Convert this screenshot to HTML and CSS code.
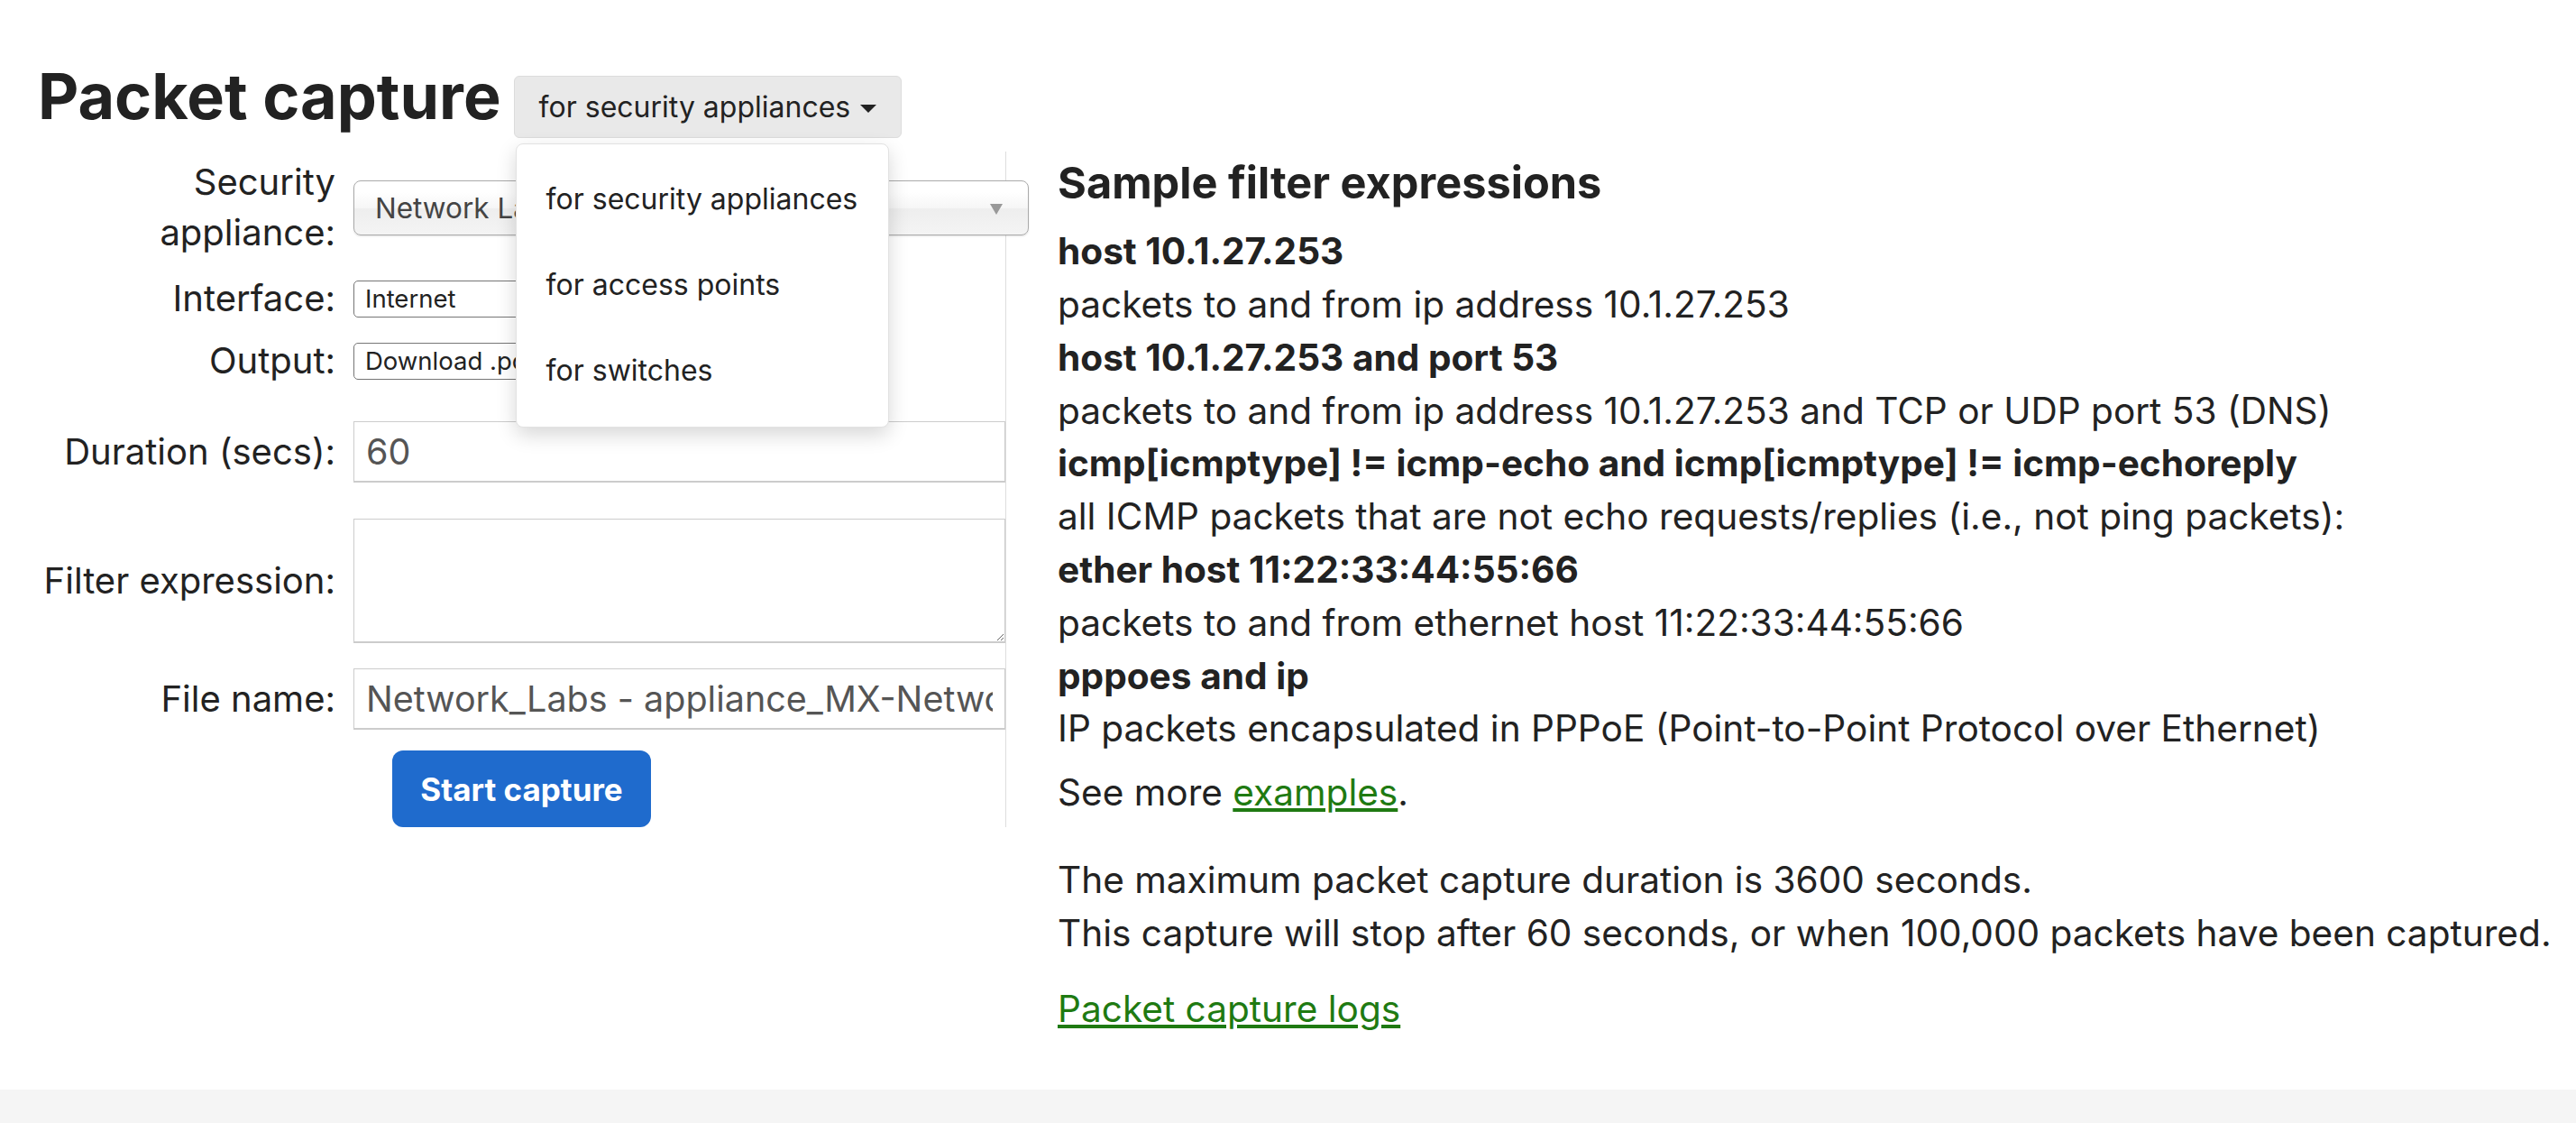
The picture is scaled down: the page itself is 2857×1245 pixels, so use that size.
FILE: index.html
```html
<!DOCTYPE html>
<html lang="en">
<head>
    <meta charset="UTF-8">
    <meta name="viewport" content="width=device-width, initial-scale=1.0">
    <title>Packet capture</title>
    <link rel="stylesheet" href="styles.css">
</head>
<body>
    <div class="page-header">
        <h1 class="page-title">Packet capture</h1>
        <div class="type-picker">
            <button class="type-toggle">for security appliances <span class="caret"></span></button>
            <div class="type-menu">
                <a href="#">for security appliances</a>
                <a href="#">for access points</a>
                <a href="#">for switches</a>
            </div>
        </div>
    </div>

    <div class="capture">
        <form class="capture-form">
            <div class="field field-first">
                <label class="field-label">Security appliance:</label>
                <div class="appliance-select">
                    <span>Network Labs - appliance_MX</span>
                    <b class="appliance-arrow"></b>
                </div>
            </div>

            <div class="field field-interface">
                <label class="field-label" for="iface">Interface:</label>
                <select id="iface" class="plain-select">
                    <option>Internet</option>
                </select>
            </div>

            <div class="field field-output">
                <label class="field-label" for="output">Output:</label>
                <select id="output" class="plain-select">
                    <option>Download .pcap file (for Wireshark)</option>
                </select>
            </div>

            <div class="field field-duration">
                <label class="field-label" for="duration">Duration (secs):</label>
                <input id="duration" class="text-input" type="text" value="60">
            </div>

            <div class="field field-filter">
                <label class="field-label" for="filter">Filter expression:</label>
                <textarea id="filter" class="text-input filter-box"></textarea>
            </div>

            <div class="field field-file">
                <label class="field-label" for="fileName">File name:</label>
                <input id="fileName" class="text-input" type="text" value="Network_Labs - appliance_MX-Network_Labs - Internet">
            </div>

            <div class="form-actions">
                <button type="button" class="start-btn">Start capture</button>
            </div>
        </form>

        <div class="info">
            <h2>Sample filter expressions</h2>
            <dl>
                <dt>host 10.1.27.253</dt>
                <dd>packets to and from ip address 10.1.27.253</dd>
                <dt>host 10.1.27.253 and port 53</dt>
                <dd>packets to and from ip address 10.1.27.253 and TCP or UDP port 53 (DNS)</dd>
                <dt>icmp[icmptype] != icmp-echo and icmp[icmptype] != icmp-echoreply</dt>
                <dd>all ICMP packets that are not echo requests/replies (i.e., not ping packets):</dd>
                <dt>ether host 11:22:33:44:55:66</dt>
                <dd>packets to and from ethernet host 11:22:33:44:55:66</dd>
                <dt>pppoes and ip</dt>
                <dd>IP packets encapsulated in PPPoE (Point-to-Point Protocol over Ethernet)</dd>
            </dl>
            <p class="more">See more <a href="#">examples</a>.</p>
            <p class="limits">The maximum packet capture duration is 3600 seconds.<br>This capture will stop after 60 seconds, or when 100,000 packets have been captured.</p>
            <p class="logs"><a href="#">Packet capture logs</a></p>
        </div>
    </div>

    <div class="site-footer"></div>
</body>
</html>
```

FILE: styles.css
```css
body {
    margin: 0;
    font-family: Inter, "Noto Sans", sans-serif;
    color: #222;
    background: #fff;
}
.page-header {
    display: flex;
    align-items: flex-start;
    gap: 14px;
    padding: 65px 0 0 42px;
}
.page-title {
    margin: 0;
    font-size: 70px;
    line-height: 83px;
    font-weight: 700;
}
.type-picker {
    position: relative;
    margin-top: 19px;
}
.type-toggle {
    display: flex;
    align-items: center;
    gap: 11px;
    height: 69px;
    box-sizing: border-box;
    padding: 0 27px;
    background: #e9e9e9;
    border: 1px solid #dcdcdc;
    border-radius: 6px;
    font-family: Inter, sans-serif;
    font-size: 32px;
    color: #222;
}
.caret {
    width: 0;
    height: 0;
    margin-top: 3px;
    border-top: 9px solid #222;
    border-left: 9px solid transparent;
    border-right: 9px solid transparent;
}
.type-menu {
    position: absolute;
    top: 75px;
    left: 2px;
    width: 414px;
    box-sizing: border-box;
    padding: 13px 0 15px;
    background: #fff;
    border: 1px solid #e2e2e2;
    border-radius: 8px;
    box-shadow: 0 8px 22px rgba(0, 0, 0, 0.16);
    z-index: 10;
}
.type-menu a {
    display: block;
    padding: 23.7px 33px;
    font-size: 32px;
    line-height: 47.6px;
    white-space: nowrap;
    color: #222;
    text-decoration: none;
}
.capture {
    display: flex;
    align-items: flex-start;
    margin-top: 15px;
}
.capture-form {
    width: 1116px;
    flex-shrink: 0;
    box-sizing: border-box;
    padding: 6px 0 0 32px;
    margin: 0;
    border-right: 1px solid #ddd;
}
.field {
    display: flex;
    align-items: center;
    gap: 20px;
}
.field-interface {
    margin-top: 17px;
}
.field-output {
    margin-top: 13px;
}
.field-duration {
    margin-top: 39px;
}
.field-filter {
    margin-top: 40px;
}
.field-file {
    margin-top: 28px;
}
.field-label {
    width: 340px;
    flex-shrink: 0;
    text-align: right;
    font-size: 40px;
    line-height: 56px;
}
.appliance-select {
    position: relative;
    display: flex;
    align-items: center;
    width: 749px;
    height: 61px;
    flex-shrink: 0;
    box-sizing: border-box;
    padding: 0 23px;
    border: 1px solid #aaa;
    border-radius: 8px;
    background: linear-gradient(#fff 20%, #f6f6f6 50%, #eee 52%, #f4f4f4 100%);
    box-shadow: 0 1px 2px rgba(0, 0, 0, 0.12);
    font-size: 31.5px;
    color: #444;
}
.appliance-arrow {
    position: absolute;
    right: 28px;
    top: 25px;
    width: 0;
    height: 0;
    border-top: 12px solid #999;
    border-left: 7px solid transparent;
    border-right: 7px solid transparent;
}
.plain-select {
    width: 360px;
    height: 41px;
    box-sizing: border-box;
    padding: 0 8px;
    border: 1px solid #767676;
    border-radius: 5px;
    background: #fff;
    font-family: Inter, sans-serif;
    font-size: 27.5px;
    color: #222;
}
.text-input {
    width: 723px;
    height: 68px;
    box-sizing: border-box;
    padding: 0 13px;
    border: 1px solid #ccc;
    border-bottom-width: 2px;
    font-family: Inter, sans-serif;
    font-size: 39.5px;
    color: #555;
}
.filter-box {
    height: 138px;
    padding: 10px 13px;
}
.form-actions {
    margin-top: 23px;
    padding-left: 403px;
}
.start-btn {
    width: 287px;
    height: 85px;
    border: none;
    border-radius: 12px;
    background: #1f6bcd;
    color: #fff;
    font-family: Inter, sans-serif;
    font-size: 35px;
    font-weight: 700;
}
.info {
    padding: 6px 0 0 57px;
    font-size: 40.6px;
    line-height: 58.8px;
}
.info h2 {
    margin: 0 0 18.7px;
    font-size: 48.7px;
    line-height: 57.6px;
    font-weight: 700;
}
.info dl {
    margin: 0;
}
.info dt {
    font-weight: 700;
}
.info dd {
    margin: 0;
}
.info p {
    margin: 0;
}
.info .more {
    margin-top: 12px;
}
.info .limits {
    margin-top: 38px;
}
.info .logs {
    margin-top: 25px;
}
.info a {
    color: #1f7a12;
}
.site-footer {
    margin-top: 60px;
    height: 100px;
    background: #f5f5f5;
}
```
